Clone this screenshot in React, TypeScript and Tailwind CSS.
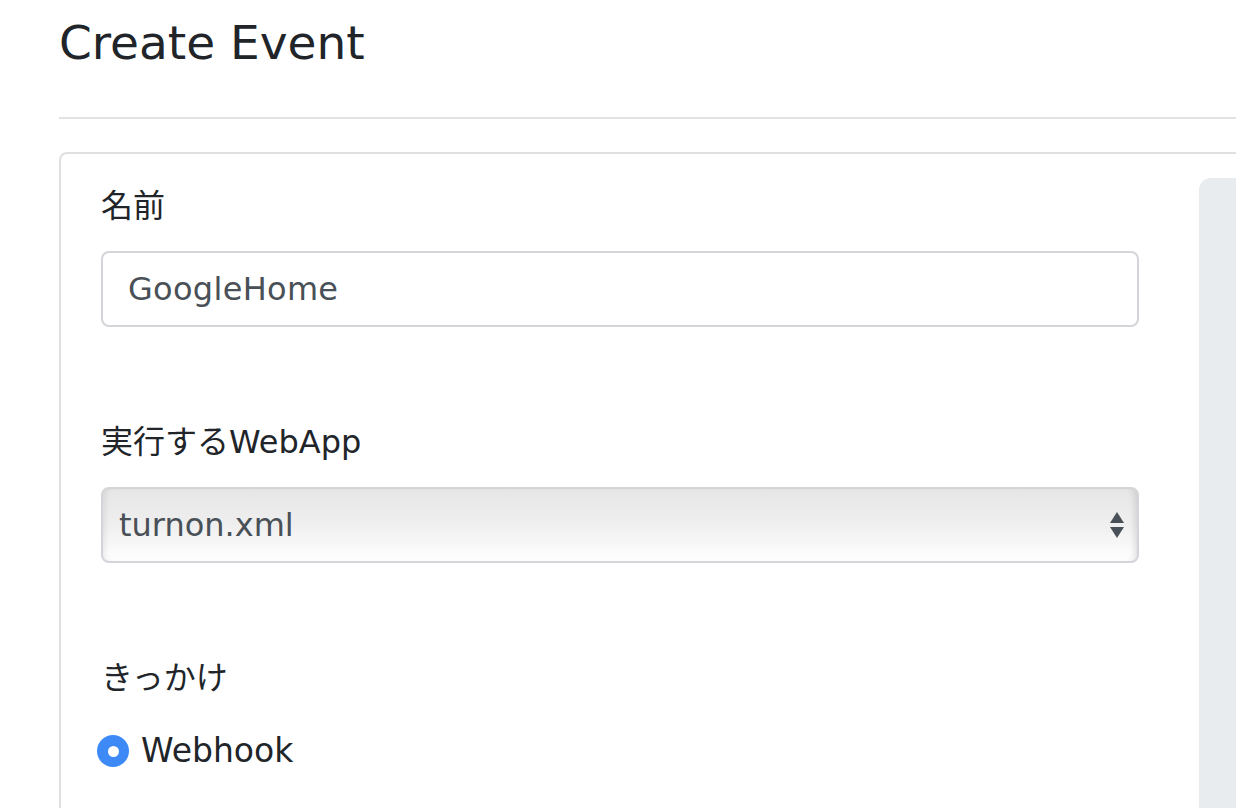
import { ChangeEvent, useState } from "react";

const FONT = { fontFamily: '"DejaVu Sans", "Noto Sans CJK JP", sans-serif' };

const Field = ({ label, children }: { label: string; children: React.ReactNode }) => (
  <div className="flex flex-col">
    <label className="text-[32px] leading-[40px] text-[#212529]">{label}</label>
    <div className="mt-[25px]">{children}</div>
  </div>
);

const SelectArrows = () => (
  <svg width="16" height="30" viewBox="0 0 16 30" className="text-[#495057]" aria-hidden>
    <path d="M8 2 L15 13 H1 Z" fill="currentColor" />
    <path d="M8 28 L15 17 H1 Z" fill="currentColor" />
  </svg>
);

const App = () => {
  const [name, setName] = useState("GoogleHome");
  const [app, setApp] = useState("turnon.xml");

  return (
    <div className="h-[808px] w-[1236px] overflow-hidden bg-white" style={FONT}>
      <div className="pl-[59px]">
        <h1 className="pt-[13px] text-[47px] leading-[60px] text-[#212529]">Create Event</h1>
        <hr className="mt-[44px] w-[1300px] border-t-2 border-[#e3e3e3]" />

        <div className="mt-[33px] flex w-[1300px] rounded-t-[8px] border-2 border-[#e0e0e0]">
          <div className="w-[1138px] pl-[40px] pt-[32px]">
            <div className="flex w-[1038px] flex-col gap-[95px]">
              <Field label="名前">
                <input
                  value={name}
                  onChange={(e: ChangeEvent<HTMLInputElement>) => setName(e.target.value)}
                  className="h-[76px] w-full rounded-[8px] border-2 border-[#d4d5d9] px-[25px] text-[32px] tracking-[0.3px] text-[#495057] outline-none"
                  style={FONT}
                />
              </Field>

              <Field label="実行するWebApp">
                <div className="relative flex h-[76px] w-full items-center rounded-[8px] border-2 border-[#d4d5d9] bg-gradient-to-b from-[#e6e6e6] via-[#efefef] to-white pl-[16px] pr-[12px] shadow-[inset_-6px_0_6px_-4px_rgba(0,0,0,0.12),inset_6px_0_6px_-4px_rgba(0,0,0,0.08)]">
                  <span className="text-[32px] text-[#495057]">{app}</span>
                  <div className="ml-auto">
                    <SelectArrows />
                  </div>
                  <select
                    value={app}
                    onChange={(e: ChangeEvent<HTMLSelectElement>) => setApp(e.target.value)}
                    className="absolute inset-0 opacity-0"
                  >
                    <option value="turnon.xml">turnon.xml</option>
                    <option value="turnoff.xml">turnoff.xml</option>
                  </select>
                </div>
              </Field>

              <div className="flex flex-col">
                <span className="text-[32px] leading-[40px] text-[#212529]">きっかけ</span>
                <label className="mt-[33px] -ml-[4px] flex items-center gap-[12px]">
                  <span className="flex h-[32px] w-[32px] items-center justify-center rounded-full bg-[#3d8af7]">
                    <span className="h-[11px] w-[11px] rounded-full bg-white" />
                  </span>
                  <span className="text-[33px] leading-[40px] text-[#212529]">Webhook</span>
                </label>
              </div>
            </div>
          </div>
          <div className="mt-[24px] h-[700px] flex-1 rounded-tl-[12px] bg-[#e9ecef]" />
        </div>
      </div>
    </div>
  );
};

export default App;
